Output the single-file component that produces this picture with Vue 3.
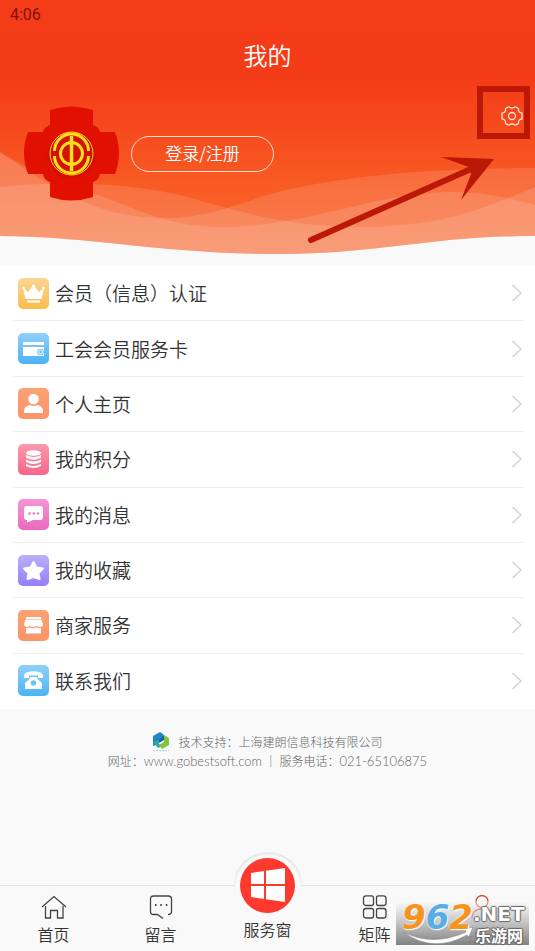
<template>
  <div class="page">
    <header class="header">
      <!-- Wave background -->
      <svg class="header-bg" viewBox="0 0 535 254" preserveAspectRatio="none" aria-hidden="true">
        <defs>
          <linearGradient id="headerFill" x1="0" y1="0" x2="0" y2="1">
            <stop offset="0" stop-color="#f53c19" />
            <stop offset="0.3" stop-color="#f43b17" />
            <stop offset="0.75" stop-color="#f85c24" />
            <stop offset="1" stop-color="#f96a34" />
          </linearGradient>
          <clipPath id="headerClip">
            <path d="M0 0H535V236C430 236 380 254 280 254C160 254 90 236 0 236Z" />
          </clipPath>
        </defs>
        <g clip-path="url(#headerClip)">
          <rect width="535" height="254" fill="url(#headerFill)" />
          <g fill="#fff" fill-opacity="0.13">
            <path d="M0 152C45 182 90 217 160 218C215 219 245 199 290 189C370 172 450 168 535 168V254H0Z" />
            <path d="M0 187C70 180 130 184 180 195C240 212 290 227 356 227C440 227 475 212 535 187V254H0Z" />
            <path d="M0 152C30 170 60 182 93 193C140 210 165 226 220 227C310 227 375 192 450 192C485 192 510 198 535 205V254H0Z" />
          </g>
        </g>
      </svg>

      <div class="header-content">
        <div class="status-bar">4:06</div>
        <h1 class="title">我的</h1>
        <div class="profile">
          <svg class="avatar" viewBox="0 0 95 95" aria-hidden="true">
            <path fill="#e11000" d="M26 4Q47 -3 69 4V19Q75 21 76 26H91Q99 47 91 68H76Q75 74 69 76V91Q47 98 26 91V76Q20 74 19 68H4Q-4 47 4 26H19Q20 21 26 19Z" />
            <circle cx="47.500" cy="49" r="24" fill="#c90d00" opacity="0.5" />
            <g fill="none" stroke="#ffdf1e">
              <circle cx="47.500" cy="47.500" r="21.500" stroke-width="1" fill="#d51100" />
              <path d="M30.500 45A17 17 0 0 1 64.500 45M30.500 50A17 17 0 0 0 64.500 50" stroke-width="3" />
              <circle cx="47.500" cy="47.500" r="11" stroke-width="3" />
              <path d="M47.500 30V65" stroke-width="3.500" />
            </g>
          </svg>
          <button class="login-button" type="button">登录/注册</button>
          <button class="settings-button" type="button" aria-label="设置">
            <svg viewBox="0 0 22 20" aria-hidden="true">
              <path d="M7.500 .8Q9 2 11 2T14.500 .8L17.500 2.600Q17 6.500 21 7.200V12.800Q17 13.500 17.500 17.400L14.500 19.200Q13 18 11 18T7.500 19.200L4.500 17.400Q5 13.500 1 12.800V7.200Q5 6.500 4.500 2.600Z" />
              <circle cx="11" cy="10" r="3.500" />
            </svg>
          </button>
        </div>
      </div>

      <!-- Pointer to the settings button -->
      <svg class="pointer" viewBox="0 0 225 160" aria-hidden="true">
        <rect x="175" y="9" width="47" height="47" fill="none" stroke="#bb1806" stroke-width="6" />
        <path d="M6 160L166 89" stroke="#bb1806" stroke-width="6" stroke-linecap="round" />
        <path d="M189 79L136 77L164 87L166 94L156 120Z" fill="#bb1806" />
      </svg>
    </header>

    <!-- Menu list -->
    <nav class="menu">
      <a v-for="item in menuItems" :key="item.label" class="menu-item" href="#">
        <span class="menu-icon" :class="item.color">
          <svg viewBox="0 0 31 31" aria-hidden="true">
            <g v-html="item.icon"></g>
          </svg>
        </span>
        <span class="menu-label">{{ item.label }}</span>
        <svg class="chevron" viewBox="0 0 12 20" aria-hidden="true">
          <path d="M1.500 2L10 10L1.500 18" />
        </svg>
      </a>
    </nav>

    <footer class="support">
      <p class="support-company">
        <svg class="support-logo" viewBox="0 0 18 20" aria-hidden="true">
          <path fill="#2384c6" d="M1 4L8 0L12 3V7L7 9V12L1 14Z" />
          <path fill="#1f5f9f" d="M7 8L12 4V8L7 11Z" />
          <path fill="#27ad9a" d="M1 10L7 8V12L10 14L6 16Z" />
          <path fill="#82c43c" d="M12 3L17 6V13L10 17L7 13L12 10Z" />
          <path d="M1 18.500H17" stroke="#a9dbea" stroke-dasharray="2 1" />
        </svg>
        技术支持：上海建朗信息科技有限公司
      </p>
      <p>网址：<span class="latin">www.gobestsoft.com</span> ｜ 服务电话：<span class="latin">021-65106875</span></p>
    </footer>

    <!-- Bottom tabs -->
    <nav class="tabbar">
      <a class="tab" href="#">
        <svg viewBox="0 0 26 24" aria-hidden="true">
          <path d="M1 12L13 1.500L25 12M4.500 11V23H9.500V15.500H16.500V23H22V11" />
        </svg>
        <span>首页</span>
      </a>
      <a class="tab" href="#">
        <svg viewBox="0 0 26 24" aria-hidden="true">
          <path d="M15 23.500L9.500 19.500H5.500Q2.500 19.500 2.500 16.500V4Q2.500 1 5.500 1H20.500Q23.500 1 23.500 4V16.500Q23.500 19.500 20 19.500" />
          <path d="M7 10H8.500M12.300 10H13.800M17.800 10H19.300" stroke-width="2" />
        </svg>
        <span>留言</span>
      </a>
      <a class="tab tab-center" href="#">
        <span class="tab-ring">
          <span class="tab-circle">
            <svg viewBox="0 0 34 34" aria-hidden="true">
              <path fill="#fff" d="M0 5L13 3V16H0ZM15 2.800L34 0V16H15ZM0 18H13V31L0 29ZM15 18H34V34L15 31.200Z" />
            </svg>
          </span>
        </span>
        <span>服务窗</span>
      </a>
      <a class="tab" href="#">
        <svg viewBox="0 0 26 24" aria-hidden="true">
          <path d="M4 .8H9.500Q11.500 .8 11.500 2.800V8.500Q11.500 10.500 9.500 10.500H4Q1.500 10.500 1.500 8V3.300Q1.500 .8 4 .8ZM16.500 .8H21.500Q24 .8 24 3.300V8Q24 10.500 21.500 10.500H16.500Q14.500 10.500 14.500 8.500V2.800Q14.500 .8 16.500 .8ZM4 13.500H9.500Q11.500 13.500 11.500 15.500V21Q11.500 23 9.500 23H4Q1.500 23 1.500 20.500V16Q1.500 13.500 4 13.500ZM16.500 13.500H21.500Q24 13.500 24 16V20.500Q24 23 21.500 23H16.500Q14.500 23 14.500 21V15.500Q14.500 13.500 16.500 13.500Z" />
        </svg>
        <span>矩阵</span>
      </a>
      <a class="tab tab-active" href="#">
        <svg viewBox="0 0 26 24" aria-hidden="true">
          <circle cx="13" cy="6.500" r="6" />
          <path d="M3 24Q3 14 13 14T23 24" />
        </svg>
        <span>我的</span>
      </a>
    </nav>

    <!-- Watermark -->
    <div class="watermark">
      <svg class="swoosh" viewBox="0 0 133 44" aria-hidden="true">
        <path d="M7 31Q37 46 70 31L69 28L77 26L73 36L71 34Q37 53 7 31Z" fill="#fff" stroke="#888" stroke-width="0.600" />
      </svg>
      <div class="mark-number">9<span class="mark-blue">6</span>2</div>
      <div class="mark-site">
        <span class="mark-net">.NET</span>
        <span class="mark-name">乐游网</span>
      </div>
    </div>
  </div>
</template>

<script setup>
const menuItems = [
  {
    label: '会员（信息）认证',
    color: 'yellow',
    icon: '<path d="M5 10L10 14L15.500 7L21 14L26 10L23.500 21H7.500ZM9 22.500H22V24.500H9Z"/><circle cx="5.500" cy="10" r="1.300"/><circle cx="15.500" cy="8" r="1.500"/><circle cx="25.500" cy="10" r="1.300"/>'
  },
  {
    label: '工会会员服务卡',
    color: 'blue',
    icon: '<path d="M5 9H26V12H5ZM5 14H26V23H5Z"/><circle cx="22.500" cy="19" r="3.300" fill="#68bdf7"/><circle cx="22.500" cy="19" r="2" fill="none" stroke="#fff"/>'
  },
  {
    label: '个人主页',
    color: 'orange',
    icon: '<circle cx="15.500" cy="11" r="5.300"/><path d="M6 25V23Q6 18 12 17Q15.500 19 19 17Q25 18 25 23V25Z"/>'
  },
  {
    label: '我的积分',
    color: 'rose',
    icon: '<ellipse cx="15.500" cy="9" rx="7.500" ry="2.800"/><path d="M8 11Q15.500 15 23 11V13.500Q15.500 18 8 13.500ZM8 15.500Q15.500 19.500 23 15.500V18Q15.500 22 8 18ZM8 20Q15.500 24 23 20V22Q15.500 26 8 22Z"/>'
  },
  {
    label: '我的消息',
    color: 'pink',
    icon: '<path d="M9 7H22Q25 7 25 10V18Q25 21 22 21H15L9 23.500V21Q6 21 6 18V10Q6 7 9 7Z"/><g fill="#ec7bc5"><circle cx="11.500" cy="14.500" r="1.300"/><circle cx="15.800" cy="14.500" r="1.300"/><circle cx="20" cy="14.500" r="1.300"/></g>'
  },
  {
    label: '我的收藏',
    color: 'purple',
    icon: '<path d="M15.500 7L18.500 12.500L25 13.500L20.500 18L21.500 24L15.500 22L9.500 24L10.500 18L6 13.500L12.500 12.500Z" stroke="#fff" stroke-width="2" stroke-linejoin="round"/>'
  },
  {
    label: '商家服务',
    color: 'orange',
    icon: '<path d="M8 7H23V9H8ZM7.500 9.500H23.500L25 14Q25 17 22 17Q20 17 19 15.500Q17.500 17 15.500 17T12 15.500Q11 17 9 17Q6 17 6 14ZM8 18Q10 18.500 12 17.200Q15.500 19.500 19 17.200Q21 18.500 23 18V23.500H8Z"/>'
  },
  {
    label: '联系我们',
    color: 'blue',
    icon: '<path d="M6 13Q5 8 10 7Q15.500 5.500 21 7Q26 8 25 13H20V10.500H11V13ZM12.500 12H18.500Q20 15 24 18V24H7V18Q11 15 12.500 12Z"/><circle cx="15.500" cy="18" r="2.700" fill="#6bc0f7"/>'
  }
]
</script>

<style>
body {
  margin: 0;
  background: #f9f9f9;
}
</style>

<style scoped>
.page {
  position: relative;
  display: flex;
  flex-direction: column;
  min-height: 100vh;
  background: #f9f9f9;
  color: #333;
  font-family: "Noto Sans CJK SC", sans-serif;
  font-weight: 350;
}

a {
  color: inherit;
  text-decoration: none;
}

button {
  font: inherit;
  color: inherit;
  background: none;
  border: none;
  padding: 0;
  cursor: pointer;
}

/* Header */
.header {
  position: relative;
  color: #fff;
}

.header-bg {
  position: absolute;
  top: 0;
  left: 0;
  width: 100%;
  height: 254px;
}

.header-content {
  position: relative;
  padding-bottom: 65px;
}

.status-bar {
  padding: 0 10px;
  font-family: Roboto, sans-serif;
  font-size: 16px;
  font-weight: 400;
  line-height: 30px;
  color: #7c1206;
}

.title {
  margin: 0 0 26px;
  font-size: 24px;
  font-weight: 350;
  line-height: 50px;
  text-align: center;
}

.profile {
  display: flex;
  align-items: center;
  gap: 12px;
  padding: 0 12px 0 24px;
}

.avatar {
  width: 95px;
  height: 95px;
}

.login-button {
  width: 143px;
  height: 36px;
  border: 1px solid rgba(255, 255, 255, 0.8);
  border-radius: 18px;
  font-size: 17px;
  line-height: 32px;
  padding-bottom: 2px;
}

.settings-button {
  align-self: flex-start;
  width: 22px;
  height: 20px;
  margin-left: auto;
}

.settings-button svg {
  display: block;
  fill: none;
  stroke: #ffe3d5;
  stroke-width: 1.3;
  stroke-linejoin: round;
}

.pointer {
  position: absolute;
  top: 80px;
  right: 5px;
  width: 225px;
  height: 160px;
  overflow: visible;
  pointer-events: none;
}

/* Menu */
.menu {
  display: grid;
  grid-auto-rows: 1fr;
  min-height: 443px;
  background: #fff;
}

.menu-item {
  display: flex;
  align-items: center;
  margin: 0 12px;
  padding-left: 6px;
  border-bottom: 1px solid #eee;
}

.menu-item:last-child {
  border-bottom-color: transparent;
}

.menu-icon {
  width: 31px;
  height: 31px;
  margin-right: 6px;
  border-radius: 5px;
}

.menu-icon svg {
  display: block;
  fill: #fff;
}

.yellow {
  background: linear-gradient(#fbd692, #fcbc4c);
}

.blue {
  background: linear-gradient(#8ed0fa, #4cb3f6);
}

.orange {
  background: linear-gradient(#fca274, #fa9467);
}

.rose {
  background: linear-gradient(#fb99ad, #f8668a);
}

.pink {
  background: linear-gradient(#f695d5, #e96abd);
}

.purple {
  background: linear-gradient(#b9b0fb, #957dfa);
}

.menu-label {
  flex: 1;
  font-size: 19px;
  line-height: 28px;
}

.chevron {
  width: 12px;
  height: 20px;
  fill: none;
  stroke: #d2d2d2;
  stroke-width: 1.5;
}

/* Support info */
.support {
  padding: 23px 0;
  font-size: 12px;
  font-weight: 300;
  line-height: 19px;
  color: #666;
  text-align: center;
}

.support p {
  margin: 0;
}

.support .support-company {
  display: flex;
  align-items: center;
  justify-content: center;
  gap: 8px;
}

.support-logo {
  width: 18px;
  height: 20px;
  margin: -1px 0;
}

.latin {
  font-family: Lato, sans-serif;
  font-size: 13px;
}

/* Bottom tabs */
.tabbar {
  display: grid;
  grid-template-columns: repeat(5, 1fr);
  margin-top: auto;
  border-top: 1px solid #e3e3e3;
}

.tab {
  display: flex;
  flex-direction: column;
  align-items: center;
  gap: 5px;
  padding: 9px 0 7px;
  font-size: 16px;
  line-height: 20px;
}

.tab > svg {
  width: 26px;
  height: 24px;
  fill: none;
  stroke: #444;
  stroke-width: 1.3;
}

.tab-center {
  gap: 0;
  margin-top: -35px;
  padding: 0;
}

.tab-ring {
  display: flex;
  align-items: center;
  justify-content: center;
  width: 68px;
  height: 68px;
  border-radius: 50%;
  background: radial-gradient(circle at 50% 54%, #fafafa 32px, #e6e6e6 35px, #f9f9f9 36px);
}

.tab-circle {
  display: flex;
  align-items: center;
  justify-content: center;
  width: 55px;
  height: 55px;
  border-radius: 50%;
  background: #fe3a2f;
}

.tab-circle svg {
  width: 34px;
  height: 34px;
}

.tab-active {
  color: #e2472e;
}

.tab-active > svg {
  stroke: #e2472e;
}

/* Watermark */
.watermark {
  position: absolute;
  right: 6px;
  bottom: 6px;
  display: flex;
  width: 133px;
  height: 44px;
  background: linear-gradient(rgba(255, 255, 255, 0.4), rgba(190, 190, 190, 0.8) 45%, rgba(120, 120, 120, 0.92));
  font-family: "DejaVu Sans", "Noto Sans CJK SC", sans-serif;
  font-weight: 700;
  pointer-events: none;
}

.swoosh {
  position: absolute;
  inset: 0;
}

.mark-number {
  position: relative;
  padding-left: 6px;
  font-size: 34px;
  font-style: italic;
  line-height: 32px;
  color: #f7941d;
  text-shadow: 0 0 2px #fff, 1px 1px 1px #fff;
}

.mark-blue {
  color: #58aee3;
}

.mark-site {
  position: relative;
  display: flex;
  flex-direction: column;
  color: #fff;
  text-shadow: 1px 0 1px #666, -1px 0 1px #666, 0 1px 1px #666, 0 -1px 1px #666;
}

.mark-net {
  font-size: 20px;
  line-height: 26px;
}

.mark-name {
  padding-left: 2px;
  font-family: "Noto Sans CJK SC", sans-serif;
  font-size: 16px;
  line-height: 16px;
}
</style>
